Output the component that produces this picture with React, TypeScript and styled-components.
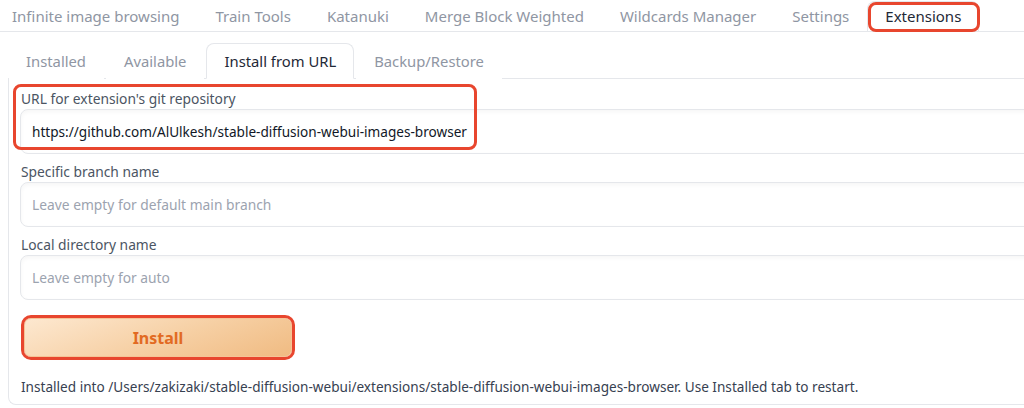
import React from "react";
import styled, { createGlobalStyle } from "styled-components";

const Global = createGlobalStyle`
  html, body { margin: 0; padding: 0; background: #ffffff; overflow: hidden; }
  body { font-family: "Noto Sans", "Open Sans", sans-serif; }
  * { box-sizing: border-box; }
`;

const RED = "#e8462e";

const Page = styled.div`
  width: 1080px;
  display: flex;
  flex-direction: column;
`;

const TopBar = styled.div`
  display: flex;
  height: 32px;
  border-bottom: 1px solid #e5e7eb;
  margin-left: -6px;
`;

const TopTab = styled.div<{ $active?: boolean }>`
  position: relative;
  padding: 0 17px;
  height: 30px;
  line-height: 28px;
  font-size: 15px;
  color: ${(p) => (p.$active ? "#1f2937" : "#8f96a3")};
  background: ${(p) => (p.$active ? "#ffffff" : "transparent")};
  border: 1px solid ${(p) => (p.$active ? "#e5e7eb" : "transparent")};
  border-bottom: none;
  border-radius: 8px 8px 0 0;
  margin-top: 1px;
  white-space: nowrap;
`;

const Highlight = styled.div`
  position: absolute;
  border: 3px solid ${RED};
  border-radius: 8px;
  pointer-events: none;
`;

const TabHighlight = styled(Highlight)`
  left: 0;
  right: -2px;
  top: 0;
  bottom: -1px;
`;

const SubBar = styled.div`
  display: flex;
  gap: 2px;
  margin: 11px 0 0 8px;
  border-bottom: 1px solid #e5e7eb;
  height: 36px;
`;

const SubTab = styled.div<{ $active?: boolean }>`
  padding: 0 17px;
  height: 36px;
  line-height: 34px;
  font-size: 14.8px;
  color: ${(p) => (p.$active ? "#1f2937" : "#8f96a3")};
  background: #ffffff;
  border: 1px solid ${(p) => (p.$active ? "#e5e7eb" : "transparent")};
  border-bottom: ${(p) => (p.$active ? "1px solid #ffffff" : "none")};
  border-radius: 8px 8px 0 0;
  white-space: nowrap;
`;

const Panel = styled.div`
  margin: -1px 0 0 8px;
  border-left: 1px solid #e5e7eb;
  border-bottom: 1px solid #e5e7eb;
  border-bottom-left-radius: 8px;
  padding: 12px 12px 7px 11px;
  display: flex;
  flex-direction: column;
  gap: 9px;
`;

const Field = styled.div`
  position: relative;
  display: flex;
  flex-direction: column;
  gap: 1px;
`;

const Label = styled.div`
  font-size: 13.8px;
  line-height: 18px;
  color: #4b5563;
  padding-left: 1px;
`;

const Input = styled.div<{ $placeholder?: boolean }>`
  height: 45px;
  border: 1px solid #e5e7eb;
  border-radius: 8px;
  background: #ffffff;
  box-shadow: inset 0 2px 4px rgba(0, 0, 0, 0.04);
  padding: 0 11px;
  display: flex;
  align-items: center;
  font-size: ${(p) => (p.$placeholder ? "13.8px" : "13.6px")};
  color: ${(p) => (p.$placeholder ? "#9ca3af" : "#111827")};
  white-space: nowrap;
`;

const UrlHighlight = styled(Highlight)`
  left: -7px;
  top: -6px;
  width: 464px;
  height: 66px;
`;

const ButtonRow = styled.div`
  padding: 9px 0 0 4px;
`;

const InstallButton = styled.button`
  width: 268px;
  height: 39px;
  border: 1px solid #f5c496;
  border-radius: 7px;
  background: linear-gradient(160deg, #fde8d0 0%, #f6cfa3 55%, #f0bb82 100%);
  color: #e26a22;
  font-family: "Noto Sans", "Open Sans", sans-serif;
  font-weight: 700;
  font-size: 16px;
  outline: 3px solid ${RED};
  outline-offset: 0px;
  cursor: pointer;
`;

const Status = styled.div`
  margin-top: 11px;
  font-size: 13.6px;
  line-height: 20px;
  color: #374151;
  padding-left: 1px;
  white-space: nowrap;
`;

const topTabs = [
  "Infinite image browsing",
  "Train Tools",
  "Katanuki",
  "Merge Block Weighted",
  "Wildcards Manager",
  "Settings",
];

const subTabs = ["Installed", "Available", "Install from URL", "Backup/Restore"];

export default function App() {
  return (
    <Page>
      <Global />
      <TopBar>
        {topTabs.map((t) => (
          <TopTab key={t}>{t}</TopTab>
        ))}
        <TopTab $active>
          Extensions
          <TabHighlight />
        </TopTab>
      </TopBar>
      <SubBar>
        {subTabs.map((t) => (
          <SubTab key={t} $active={t === "Install from URL"}>
            {t}
          </SubTab>
        ))}
      </SubBar>
      <Panel>
        <Field>
          <Label>URL for extension's git repository</Label>
          <Input>https://github.com/AlUlkesh/stable-diffusion-webui-images-browser</Input>
          <UrlHighlight />
        </Field>
        <Field>
          <Label>Specific branch name</Label>
          <Input $placeholder>Leave empty for default main branch</Input>
        </Field>
        <Field>
          <Label>Local directory name</Label>
          <Input $placeholder>Leave empty for auto</Input>
        </Field>
        <ButtonRow>
          <InstallButton>Install</InstallButton>
        </ButtonRow>
        <Status>
          Installed into /Users/zakizaki/stable-diffusion-webui/extensions/stable-diffusion-webui-images-browser. Use Installed tab to restart.
        </Status>
      </Panel>
    </Page>
  );
}
